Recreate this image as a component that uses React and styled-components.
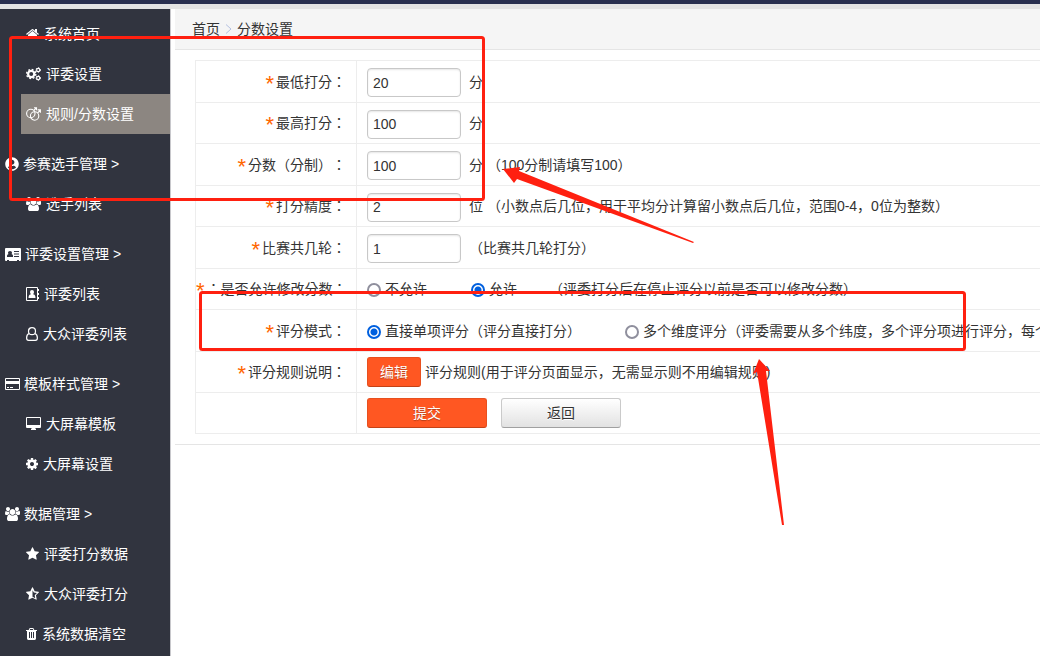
import React from 'react'
import styled, { createGlobalStyle } from 'styled-components'
import { FaUserCircle } from 'react-icons/fa'

const GlobalStyle = createGlobalStyle`
  * {
    box-sizing: border-box;
  }
  body {
    margin: 0;
    background: #fff;
    color: #333;
    font: 14px/20px 'Liberation Sans', 'Noto Sans CJK SC', sans-serif;
    text-spacing-trim: space-all;
    overflow: hidden;
  }
`

const Page = styled.div`
  position: relative;
  min-height: 100vh;
  display: flex;
  flex-direction: column;
`
const TopBar = styled.header`
  height: 9px;
  background: #2a3050;
  border-bottom: 5px solid #e4e4e4;
`
const Body = styled.div`
  flex: 1;
  display: flex;
`
const Sidebar = styled.nav`
  flex: none;
  width: 171px;
  padding-top: 5px;
  background: #31343f;
  border-right: 1px solid #c8c8cc;
`
const Group = styled.div`
  & + & {
    margin-top: 10px;
  }
`
const NavLink = styled.a`
  display: flex;
  align-items: center;
  gap: ${({ $heading }) => ($heading ? 4 : 5)}px;
  height: 40px;
  margin-left: ${({ $heading }) => ($heading ? 0 : 21)}px;
  padding-left: 5px;
  color: #fff;
  text-decoration: none;
  white-space: nowrap;
  background: ${({ $active }) => ($active ? '#8c8681' : 'transparent')};

  svg {
    flex: none;
    fill: currentColor;
  }
`
const Content = styled.main`
  flex: 1;
  min-width: 0;
  margin-left: 4px;
  overflow: hidden;
`
const Breadcrumb = styled.div`
  display: flex;
  align-items: center;
  gap: 5px;
  height: 41px;
  padding-left: 17px;
  background: #f5f5f5;
  border-bottom: 1px solid #e5e5e5;

  a {
    color: inherit;
    text-decoration: none;
  }
`
const Form = styled.form`
  padding: 10px 0 10px 20px;
  border-bottom: 1px solid #e5e5e5;
`
const FormTable = styled.table`
  width: 1000px;
  border-collapse: collapse;
  table-layout: fixed;

  tr {
    height: 41px;
  }
  tr:nth-child(odd):not(:last-child) {
    height: 42px;
  }
`
const HeadCell = styled.th`
  width: 161px;
  padding: 0 10px 0 0;
  border: 1px solid #ededed;
  font-weight: normal;
  font-family: 'Liberation Sans', 'Noto Sans CJK TC', sans-serif;
  text-align: right;
  white-space: nowrap;
`
const Cell = styled.td`
  padding: 0 0 0 10px;
  border: 1px solid #ededed;
  white-space: nowrap;
`
const Line = styled.div`
  display: flex;
  align-items: center;
`
const Required = styled.span`
  margin-right: 2px;
  color: #ff6600;
  font-size: 22px;
  line-height: 14px;
  vertical-align: -4px;
`
const Input = styled.input`
  width: 94px;
  height: 29px;
  margin: 2px 8px 0 0;
  padding: 0 5px;
  border: 1px solid #c8c8c8;
  border-radius: 4px;
  box-shadow: inset 0 1px 2px rgba(0, 0, 0, 0.1);
  color: #333;
  font: inherit;
`
const Option = styled.label`
  display: flex;
  align-items: center;
  gap: 4px;
  margin-right: ${({ $gap }) => $gap || 0}px;
`
const Radio = styled.input`
  appearance: none;
  width: 14px;
  height: 14px;
  margin: 2px 0 0;
  border: 2px solid #8f8f9d;
  border-radius: 50%;
  background: #fff;

  &:checked {
    border-color: #0060df;
    background: radial-gradient(#0060df 3px, #fff 4px);
  }
`
const Button = styled.button`
  width: ${({ $wide }) => ($wide ? 120 : 54)}px;
  height: 30px;
  margin: 0 ${({ $wide }) => ($wide ? 14 : 4)}px 0 0;
  padding: 0;
  border: 1px solid ${({ $plain }) => ($plain ? '#cacaca' : '#e8501f')};
  border-bottom-color: ${({ $plain }) => ($plain ? '#a0a0a0' : '#c44217')};
  border-radius: 3px;
  background: ${({ $plain }) => ($plain ? 'linear-gradient(#fff, #e2e2e2)' : '#ff5722')};
  color: ${({ $plain }) => ($plain ? '#333' : '#fff')};
  font: inherit;
  text-shadow: ${({ $plain }) => ($plain ? '0 1px 0 #fff' : '0 1px 1px rgba(0, 0, 0, 0.3)')};
`
const Marks = styled.svg`
  position: absolute;
  top: 0;
  left: 0;
  pointer-events: none;
`

// every glyph is drawn on a 1792 high grid, 128 units to a pixel
const Icon = ({ w, d, x = 0 }) => (
  <svg width={w} height="14" viewBox={`${x} 0 ${w * 128} 1792`} aria-hidden="true">
    <path d={d} fillRule="evenodd" />
  </svg>
)

const USERS =
  'M657 896q-162 5-265 128h-134q-82 0-138-40.5t-56-118.5q0-353 124-353 6 0 43.5 21t97.5 42.5 119 21.5q67 0 133-23-5 37-5 66 0 159 93 293zm1071 637q0 120-73 189.5t-194 69.5h-874q-121 0-194-69.5t-73-189.5q0-53 3.5-103.5t14-109 26.5-108.5 43-97.5 62-81 85.5-53.5 111.5-20q10 0 43 21.5t73 48 107 48 135 21.5 135-21.5 107-48 73-48 43-21.5q61 0 111.5 20t85.5 53.5 62 81 43 97.5 26.5 108.5 14 109 3.5 103.5zm-1024-1277q0 106-75 181t-181 75-181-75-75-181 75-181 181-75 181 75 75 181zm704 384q0 159-112.5 271.5t-271.5 112.5-271.5-112.5-112.5-271.5 112.5-271.5 271.5-112.5 271.5 112.5 112.5 271.5zm576 225q0 78-56 118.5t-138 40.5h-134q-103-123-265-128 93-134 93-293 0-29-5-66 66 23 133 23 59 0 119-21.5t97.5-42.5 43.5-21q124 0 124 353zm-128-609q0 106-75 181t-181 75-181-75-75-181 75-181 181-75 181 75 75 181z'
const HOME =
  'M1472 992v480q0 26-19 45t-45 19h-384v-384h-256v384h-384q-26 0-45-19t-19-45v-480q0-1 .5-3t.5-3l575-474 575 474q1 2 1 6zm223-69l-62 74q-8 9-21 11h-3q-13 0-21-7l-692-577-692 577q-12 8-24 7-13-2-21-11l-62-74q-8-10-7-23.5t11-21.5l719-599q32-26 76-26t76 26l244 204v-195q0-14 9-23t23-9h192q14 0 23 9t9 23v408l219 182q10 8 11 21.5t-7 23.5z'
const COG =
  'M1152 896q0-106-75-181t-181-75-181 75-75 181 75 181 181 75 181-75 75-181zm512-109v222q0 12-8 23t-20 13l-185 28q-19 54-39 91 35 50 107 138 10 12 10 25t-9 23q-27 37-99 108t-94 71q-12 0-26-9l-138-108q-44 23-91 38-16 136-29 186-7 28-36 28h-222q-14 0-24.5-8.5t-11.5-21.5l-28-184q-49-16-90-37l-141 107q-10 9-25 9-14 0-25-11-126-114-165-168-7-10-7-23 0-12 8-23 15-21 51-66.5t54-70.5q-27-50-41-99l-183-27q-13-2-21-12.5t-8-23.5v-222q0-12 8-23t19-13l186-28q14-46 39-92-40-57-107-138-10-12-10-24 0-10 9-23 26-36 98.5-107.5t94.5-71.5q13 0 26 10l138 107q44-23 91-38 16-136 29-186 7-28 36-28h222q14 0 24.5 8.5t11.5 21.5l28 184q49 16 90 37l142-107q9-9 24-9 13 0 25 10 129 119 165 170 7 8 7 22 0 12-8 23-15 21-51 66.5t-54 70.5q26 50 41 98l183 28q13 2 21 12.5t8 23.5z'
const STAR =
  'M1728 647q0 22-26 48l-363 354 86 500q1 7 1 20 0 21-10.5 35.5t-30.5 14.5q-19 0-40-12l-449-236-449 236q-22 12-40 12-21 0-31.5-14.5t-10.5-35.5q0-6 2-20l86-500-364-354q-25-27-25-48 0-37 56-46l502-73 225-455q19-41 49-41t49 41l225 455 502 73q56 9 56 46z'
const TRASH =
  'M704 1376v-704q0-14-9-23t-23-9h-64q-14 0-23 9t-9 23v704q0 14 9 23t23 9h64q14 0 23-9t9-23zm256 0v-704q0-14-9-23t-23-9h-64q-14 0-23 9t-9 23v704q0 14 9 23t23 9h64q14 0 23-9t9-23zm256 0v-704q0-14-9-23t-23-9h-64q-14 0-23 9t-9 23v704q0 14 9 23t23 9h64q14 0 23-9t9-23zm-544-992h448l-48-117q-7-9-17-11h-317q-10 2-17 11zm928 32v64q0 14-9 23t-23 9h-96v948q0 83-47 143.5t-113 60.5h-832q-66 0-113-58.5t-47-141.5v-952h-96q-14 0-23-9t-9-23v-64q0-14 9-23t23-9h309l70-167q15-37 54-63t79-26h320q40 0 79 26t54 63l70 167h309q14 0 23 9t9 23z'

const Cogs = () => (
  <svg width="15" height="14" viewBox="0 0 15 14" aria-hidden="true">
    <g fill="none" stroke="currentColor">
      <circle cx="5.2" cy="7" r="3.1" strokeWidth="2.2" />
      <circle cx="5.2" cy="7" r="4.6" strokeWidth="1.4" strokeDasharray="1.800 1.813" />
      <circle cx="12.2" cy="3" r="1.6" strokeWidth="1.2" />
      <circle cx="12.2" cy="3" r="2.3" strokeWidth="1" strokeDasharray="1.200 1.209" />
      <circle cx="12.2" cy="11" r="1.6" strokeWidth="1.2" />
      <circle cx="12.2" cy="11" r="2.3" strokeWidth="1" strokeDasharray="1.200 1.209" />
    </g>
  </svg>
)
const Rings = () => (
  <svg width="15" height="14" viewBox="0 0 15 14" aria-hidden="true">
    <g fill="none" stroke="currentColor" strokeWidth="1.1">
      <circle cx="4.8" cy="6.500" r="4.200" />
      <circle cx="8.600" cy="9" r="4.200" />
      <path d="M7.800 3.500 10 1.200M8 .8h2.500v2.400M11.500 6 14.200 3.300M11.700 2.900h2.700v2.800" />
    </g>
  </svg>
)
const User = () => (
  <svg width="12" height="14" viewBox="0 0 12 14" aria-hidden="true">
    <g fill="none" stroke="currentColor" strokeWidth="1.2">
      <circle cx="6" cy="4.2" r="3.500" />
      <path d="M3 6.500C1.200 7.200.6 9 .6 11c0 1.400.8 2.400 2 2.400h6.800c1.200 0 2-1 2-2.400 0-2-.6-3.800-2.400-4.500" />
    </g>
  </svg>
)
const IdCard = () => (
  <svg width="16" height="13" viewBox="0 0 16 13" aria-hidden="true">
    <path
      d="M1 0h14q1 0 1 1v11q0 1-1 1h-1v-1h-2v1H4v-1H2v1H1q-1 0-1-1V1q0-1 1-1zM2 9h6V7.500Q7.500 6 6.500 6 7 5.500 7 4.500 7 3 5 3T3 4.500Q3 5.500 3.500 6 2.500 6 2 7.500zM9 3v1h5V3zM9 5.500v1h5v-1zM9 8v1h5V8z"
      fillRule="evenodd"
    />
  </svg>
)
const AddressBook = () => (
  <svg width="13" height="14" viewBox="0 0 13 14" aria-hidden="true">
    <path
      d="M1 0h10q1 0 1 1v12q0 1-1 1H1q-1 0-1-1V1q0-1 1-1zM1 1v12h10V1zM12 2h1v2h-1zM12 6h1v2h-1zM12 10h1v2h-1z"
      fillRule="evenodd"
    />
    <path d="M6 3q2 0 2 2 0 1.500-1 2.200Q9.500 7.500 9.500 11h-7Q2.500 7.500 5 7.200 4 6.500 4 5q0-2 2-2z" />
  </svg>
)
const Card = () => (
  <svg width="15" height="14" viewBox="0 0 15 14" aria-hidden="true">
    <path
      d="M1 1h13q1 0 1 1v10q0 1-1 1H1q-1 0-1-1V2q0-1 1-1zM1 2v2h13V2zM1 7v5h13V7zM2 10h2v1H2zM5 10h3v1H5z"
      fillRule="evenodd"
    />
  </svg>
)
const Desktop = () => (
  <svg width="15" height="14" viewBox="0 0 15 14" aria-hidden="true">
    <path d="M1 0h13q1 0 1 1v9q0 1-1 1H9l1 1v1H5v-1l1-1H1q-1 0-1-1V1q0-1 1-1zM1 1v7h13V1z" fillRule="evenodd" />
  </svg>
)
const HalfStar = () => (
  <svg width="13" height="14" viewBox="64 0 1664 1792" aria-hidden="true">
    <path d={`${STAR}M896 420v830l350 184-68-390 284-276-392-57z`} fillRule="evenodd" />
  </svg>
)

const menu = [
  {
    items: [
      { icon: <Icon w={13} x={64} d={HOME} />, text: '系统首页' },
      { icon: <Cogs />, text: '评委设置' },
      { icon: <Rings />, text: '规则/分数设置', active: true },
    ],
  },
  {
    icon: <FaUserCircle size={14} />,
    title: '参赛选手管理',
    items: [{ icon: <Icon w={15} x={64} d={USERS} />, text: '选手列表' }],
  },
  {
    icon: <IdCard />,
    title: '评委设置管理',
    items: [
      { icon: <AddressBook />, text: '评委列表' },
      { icon: <User />, text: '大众评委列表' },
    ],
  },
  {
    icon: <Card />,
    title: '模板样式管理',
    items: [
      { icon: <Desktop />, text: '大屏幕模板' },
      { icon: <Icon w={12} x={128} d={COG} />, text: '大屏幕设置' },
    ],
  },
  {
    icon: <Icon w={15} x={64} d={USERS} />,
    title: '数据管理',
    items: [
      { icon: <Icon w={13} x={64} d={STAR} />, text: '评委打分数据' },
      { icon: <HalfStar />, text: '大众评委打分' },
      { icon: <Icon w={11} x={192} d={TRASH} />, text: '系统数据清空' },
    ],
  },
]

const fields = [
  { id: 'min', label: '最低打分', value: '20', note: '分' },
  { id: 'max', label: '最高打分', value: '100', note: '分' },
  { id: 'scale', label: '分数（分制）', value: '100', note: '分 （100分制请填写100）' },
  { id: 'digits', label: '打分精度', value: '2', note: '位 （小数点后几位，用于平均分计算留小数点后几位，范围0-4，0位为整数）' },
  { id: 'rounds', label: '比赛共几轮', value: '1', note: '（比赛共几轮打分）' },
]

const Row = ({ id, label, children }) => (
  <tr>
    <HeadCell scope="row">
      {label && (
        <>
          <Required>*</Required>
          <label htmlFor={id}>{label}：</label>
        </>
      )}
    </HeadCell>
    <Cell>
      <Line>{children}</Line>
    </Cell>
  </tr>
)

export default function App() {
  return (
    <>
      <GlobalStyle />
      <Page>
        <TopBar />
        <Body>
          <Sidebar>
            {menu.map(({ icon, title, items }, i) => (
              <Group key={i}>
                {title && (
                  <NavLink href="#" $heading>
                    {icon}
                    {title} &gt;
                  </NavLink>
                )}
                {items.map(item => (
                  <NavLink key={item.text} href="#" $active={item.active}>
                    {item.icon}
                    {item.text}
                  </NavLink>
                ))}
              </Group>
            ))}
          </Sidebar>
          <Content>
            <Breadcrumb>
              <a href="#">首页</a>
              <svg width="7" height="10" viewBox="0 0 7 10" aria-hidden="true">
                <path d="M1 .5 6 5 1 9.500" fill="none" stroke="#b4c0e0" />
              </svg>
              <span>分数设置</span>
            </Breadcrumb>
            <Form onSubmit={e => e.preventDefault()}>
              <FormTable>
                <tbody>
                  {fields.map(({ id, label, value, note }) => (
                    <Row key={id} id={id} label={label}>
                      <Input id={id} defaultValue={value} />
                      {note}
                    </Row>
                  ))}
                  <Row id="deny" label="：是否允许修改分数">
                    <Option $gap={44}>
                      <Radio type="radio" name="edit" id="deny" />
                      不允许
                    </Option>
                    <Option $gap={32}>
                      <Radio type="radio" name="edit" defaultChecked />
                      允许
                    </Option>
                    （评委打分后在停止评分以前是否可以修改分数）
                  </Row>
                  <Row id="single" label="评分模式">
                    <Option $gap={44}>
                      <Radio type="radio" name="mode" id="single" defaultChecked />
                      直接单项评分（评分直接打分）
                    </Option>
                    <Option>
                      <Radio type="radio" name="mode" />
                      多个维度评分（评委需要从多个纬度，多个评分项进行评分，每个
                    </Option>
                  </Row>
                  <Row id="rules" label="评分规则说明">
                    <Button type="button" id="rules">
                      编辑
                    </Button>
                    评分规则(用于评分页面显示，无需显示则不用编辑规则)
                  </Row>
                  <Row>
                    <Button type="submit" $wide>
                      提交
                    </Button>
                    <Button type="button" $wide $plain>
                      返回
                    </Button>
                  </Row>
                </tbody>
              </FormTable>
            </Form>
          </Content>
        </Body>
        <Marks width="1040" height="656" viewBox="0 0 1040 656" aria-hidden="true">
          <g fill="none" stroke="#ff2010" strokeWidth="3">
            <rect x="10.500" y="37.500" width="473" height="162" rx="2" />
            <rect x="200.500" y="292.500" width="764" height="57" rx="2" />
          </g>
          <g fill="#ff2010">
            <path d="M503 169 520 167 519 171 694 242 693 243 517 179 514 183z" />
            <path d="M759 359 770 371 766 371 784 525 782 525 757 372 753 374z" />
          </g>
        </Marks>
      </Page>
    </>
  )
}
